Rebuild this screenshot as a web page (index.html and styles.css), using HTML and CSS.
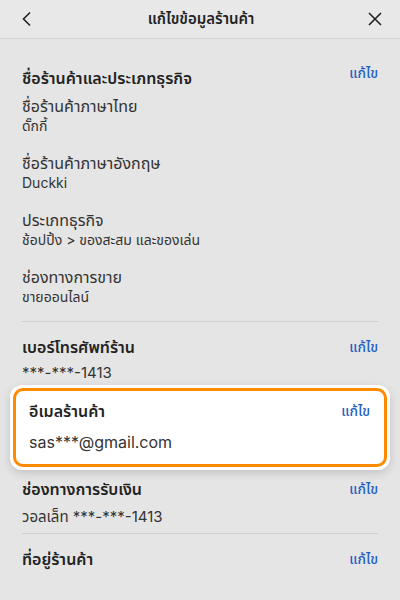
FILE: index.html
```html
<!DOCTYPE html>
<html lang="th">
<head>
  <meta charset="UTF-8" />
  <meta name="viewport" content="width=device-width, initial-scale=1.0" />
  <title>แก้ไขข้อมูลร้านค้า</title>
  <link rel="stylesheet" href="styles.css">
</head>
<body>

  <div class="topbar">
    <span class="icon-btn">
      <svg width="14" height="16" viewBox="0 0 14 16"><path d="M10 1.5 L3.5 8 L10 14.5" fill="none" stroke="#222" stroke-width="1.6"/></svg>
    </span>
    <h1>แก้ไขข้อมูลร้านค้า</h1>
    <span class="icon-btn">
      <svg width="16" height="16" viewBox="0 0 16 16"><path d="M2 2 L14 14 M14 2 L2 14" fill="none" stroke="#222" stroke-width="1.6"/></svg>
    </span>
  </div>

  <div class="content">
    <div class="section shop">
      <div class="row top">
        <h2>ชื่อร้านค้าและประเภทธุรกิจ</h2>
        <a class="edit">แก้ไข</a>
      </div>
      <div class="field">
        <div class="label">ชื่อร้านค้าภาษาไทย</div>
        <div class="value small">ดั๊กกี้</div>
      </div>
      <div class="field">
        <div class="label">ชื่อร้านค้าภาษาอังกฤษ</div>
        <div class="value small">Duckki</div>
      </div>
      <div class="field">
        <div class="label">ประเภทธุรกิจ</div>
        <div class="value small">ช้อปปิ้ง &gt; ของสะสม และของเล่น</div>
      </div>
      <div class="field">
        <div class="label">ช่องทางการขาย</div>
        <div class="value small">ขายออนไลน์</div>
      </div>
    </div>

    <div class="section phone">
      <div class="row">
        <h2>เบอร์โทรศัพท์ร้าน</h2>
        <a class="edit">แก้ไข</a>
      </div>
      <div class="value">***-***-1413</div>
    </div>

    <div class="highlight">
      <div class="card">
        <div class="row">
          <h2>อีเมลร้านค้า</h2>
          <a class="edit">แก้ไข</a>
        </div>
        <div class="value email">sas***@gmail.com</div>
      </div>
    </div>

    <div class="section payout">
      <div class="row">
        <h2>ช่องทางการรับเงิน</h2>
        <a class="edit">แก้ไข</a>
      </div>
      <div class="value">วอลเล็ท ***-***-1413</div>
    </div>

    <div class="section address">
      <div class="row">
        <h2>ที่อยู่ร้านค้า</h2>
        <a class="edit">แก้ไข</a>
      </div>
    </div>
  </div>

</body>
</html>
```

FILE: styles.css
```css
body {
  margin: 0;
  font-family: Inter, "Noto Sans Thai", "Noto Sans Thai UI", "Noto Sans", sans-serif;
  background-color: #e5e5e5;
  color: #222;
}
.topbar {
  height: 38px;
  display: flex;
  align-items: center;
  justify-content: space-between;
  padding: 0 16px 0 18px;
  border-bottom: 1px solid #d2d2d2;
  background-color: #e8e8e8;
}
.topbar h1 {
  margin: 0;
  font-size: 15px;
  font-weight: 600;
}
.icon-btn {
  width: 18px;
  display: flex;
  justify-content: center;
}
.content {
  padding: 0 22px;
}
.section {
  border-bottom: 1px solid #cfcfd4;
}
.section.shop {
  padding: 27px 0 15px;
}
.section.phone {
  padding: 13px 0 0;
  border-bottom: none;
}
.section.payout {
  padding: 7px 0 4px;
}
.section.address {
  padding: 13px 0 0;
  border-bottom: none;
}
.row {
  display: flex;
  justify-content: space-between;
  align-items: center;
}
.row.top {
  align-items: flex-start;
}
.row.top .edit {
  margin-top: -5px;
}
h2 {
  margin: 0;
  font-size: 16px;
  font-weight: 600;
  line-height: 24px;
}
.edit {
  color: #1f5fc4;
  font-size: 14px;
  font-weight: 500;
  line-height: 24px;
}
.field {
  margin-top: 5px;
  margin-bottom: 17px;
}
.field:last-child {
  margin-bottom: 0;
}
.label {
  font-size: 16px;
  line-height: 22px;
  color: #333;
}
.value {
  font-size: 15px;
  line-height: 24px;
  color: #333;
  margin-top: 2px;
}
.value.small {
  font-size: 14px;
  line-height: 18px;
  margin-top: 0;
}
.section.payout .value {
  margin-top: 4px;
}
.highlight {
  margin: 0 -12px;
  padding: 3px;
  background-color: #fff;
  border-radius: 12px;
  box-shadow: 0 3px 10px rgba(0, 0, 0, 0.15);
}
.card {
  border: 3px solid #ff8a00;
  border-radius: 10px;
  padding: 8px 14px 10px 13px;
}
.value.email {
  font-size: 16px;
  margin-top: 7px;
}
```
